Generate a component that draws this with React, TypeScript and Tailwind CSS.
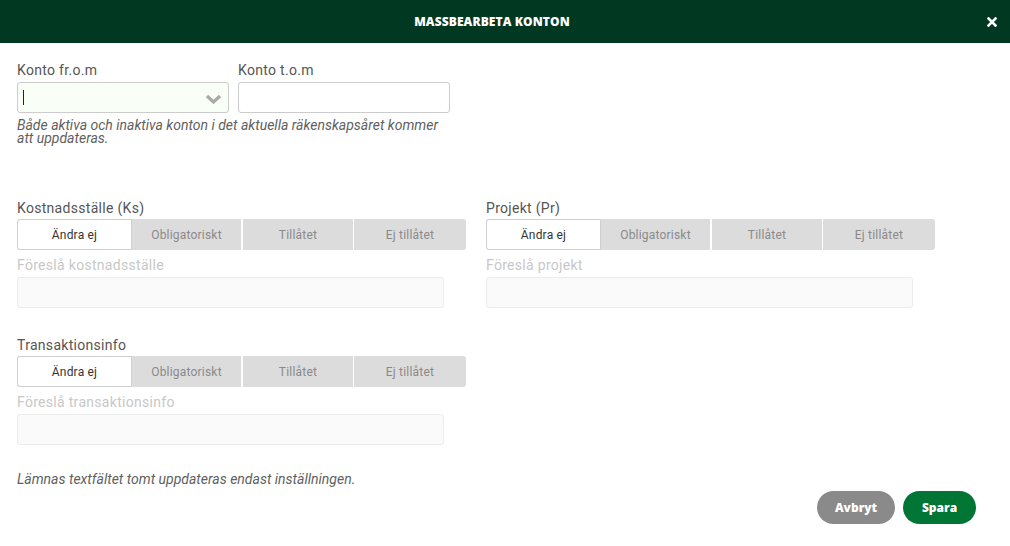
import React from "react";

function Segmented() {
  const items = ["Ändra ej", "Obligatoriskt", "Tillåtet", "Ej tillåtet"];
  return (
    <div className="flex h-[31px] w-[449px] rounded-[3px] bg-[#dcdcdc] text-[12px] tracking-[0.2px]">
      {items.map((t, i) => (
        <div
          key={t}
          className={
            i === 0
              ? "flex w-[115px] items-center justify-center rounded-l-[3px] border border-[#cfcfcf] bg-white text-[#333]"
              : i === 1
              ? "flex w-[111px] items-center justify-center border-r-2 border-white text-[#8a8a8a]"
              : i === 2
              ? "flex w-[111px] items-center justify-center border-r-[1px] border-white text-[#8a8a8a]"
              : "flex flex-1 items-center justify-center text-[#8a8a8a]"
          }
        >
          {t}
        </div>
      ))}
    </div>
  );
}

function Section({ title, suggest, w = 427 }: { title: string; suggest: string; w?: number }) {
  return (
    <div className="flex flex-col">
      <div className="h-[16px] text-[14px] leading-[16px] tracking-[0.3px] text-[#555]">{title}</div>
      <div className="mt-[3px]">
        <Segmented />
      </div>
      <div className="mt-[7px] h-[16px] text-[14px] leading-[16px] tracking-[0.3px] text-[#c8c8c8]">{suggest}</div>
      <div
        className="mt-[4px] h-[31px] rounded-[3px] border border-[#ececec] bg-[#fafafa]"
        style={{ width: w }}
      />
    </div>
  );
}

export default function App() {
  return (
    <div
      className="relative h-[546px] w-[1010px] overflow-hidden bg-white"
      style={{ fontFamily: "Roboto, 'Liberation Sans', sans-serif" }}
    >
      <div className="relative flex h-[43px] items-center justify-center bg-[#003822] pr-[26px]">
        <div
          className="text-[12px] font-extrabold tracking-[0.1px] text-white"
          style={{ fontFamily: "'Open Sans', 'Liberation Sans', sans-serif" }}
        >
          MASSBEARBETA KONTON
        </div>
        <svg
          className="absolute left-[987px] top-[17px]"
          width="10"
          height="10"
          viewBox="0 0 10 10"
        >
          <path d="M1.5 1.5 L8.5 8.5 M8.5 1.5 L1.5 8.5" stroke="white" strokeWidth="2.6" strokeLinecap="square" />
        </svg>
      </div>

      <div className="px-[17px] pt-[19px]">
        <div className="flex gap-[9px]">
          <div className="flex flex-col">
            <div className="h-[16px] text-[14px] leading-[16px] tracking-[0.3px] text-[#555]">Konto fr.o.m</div>
            <div className="relative mt-[4px] flex h-[31px] w-[212px] items-center rounded-[3px] border border-[#cccccc] bg-[#f9fef6]">
              <div className="ml-[5px] h-[15px] w-[1px] bg-[#222]" />
              <svg
                className="absolute right-[6px] top-[11px]"
                width="17"
                height="10"
                viewBox="0 0 17 10"
              >
                <path d="M2 2 L8.5 8 L15 2" fill="none" stroke="#a9a9a9" strokeWidth="3.2" />
              </svg>
            </div>
          </div>
          <div className="flex flex-col">
            <div className="h-[16px] text-[14px] leading-[16px] tracking-[0.3px] text-[#555]">Konto t.o.m</div>
            <div className="mt-[4px] h-[31px] w-[212px] rounded-[3px] border border-[#cccccc] bg-white" />
          </div>
        </div>
        <div className="mt-[6px] w-[430px] text-[14px] italic leading-[13px] text-[#5f5f5f]">
          Både aktiva och inaktiva konton i det aktuella räkenskapsåret kommer att uppdateras.
        </div>

        <div className="mt-[55px] flex gap-[20px]">
          <Section title="Kostnadsställe (Ks)" suggest="Föreslå kostnadsställe" />
          <Section title="Projekt (Pr)" suggest="Föreslå projekt" />
        </div>

        <div className="mt-[29px]">
          <Section title="Transaktionsinfo" suggest="Föreslå transaktionsinfo" />
        </div>

        <div className="mt-[27px] text-[14px] italic leading-[14px] text-[#5f5f5f]">
          Lämnas textfältet tomt uppdateras endast inställningen.
        </div>

        <div className="mr-[17px] mt-[5px] flex justify-end gap-[8px]">
          <button
            className="flex h-[33px] w-[78px] items-center justify-center rounded-full bg-[#8a8a8a] text-[12px] font-extrabold text-white"
            style={{ fontFamily: "'Open Sans', 'Liberation Sans', sans-serif" }}
          >
            Avbryt
          </button>
          <button
            className="flex h-[33px] w-[73px] items-center justify-center rounded-full bg-[#007534] text-[12px] font-extrabold text-white"
            style={{ fontFamily: "'Open Sans', 'Liberation Sans', sans-serif" }}
          >
            Spara
          </button>
        </div>
      </div>
    </div>
  );
}
